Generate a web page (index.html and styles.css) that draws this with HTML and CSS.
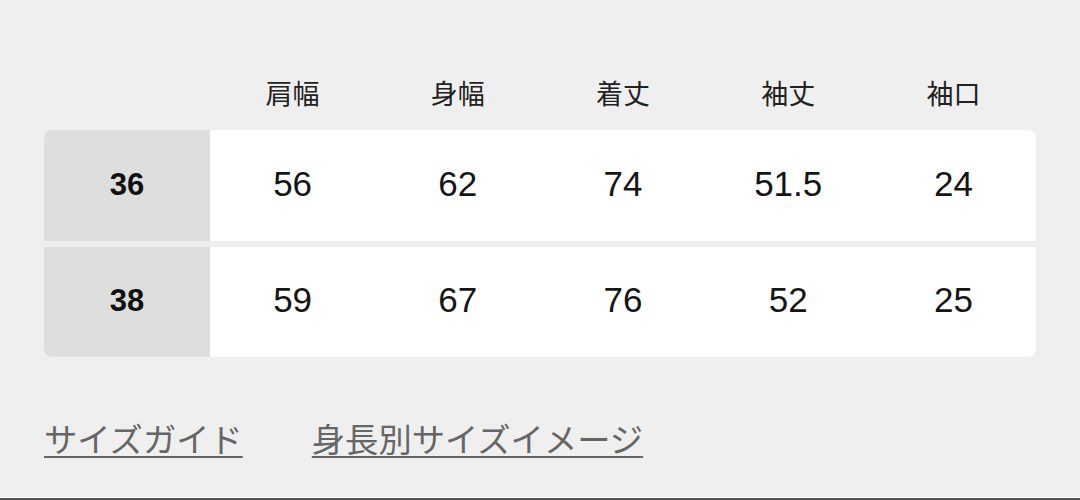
FILE: index.html
```html
<!DOCTYPE html>
<html lang="ja">
<head>
<meta charset="utf-8">
<link rel="stylesheet" href="styles.css">
</head>
<body>
<div class="page">
  <div class="head">
    <div></div>
    <div class="hcell">肩幅</div>
    <div class="hcell">身幅</div>
    <div class="hcell">着丈</div>
    <div class="hcell">袖丈</div>
    <div class="hcell">袖口</div>
  </div>
  <div class="table">
    <div class="row row-first">
      <div class="size">36</div>
      <div class="cell">56</div>
      <div class="cell">62</div>
      <div class="cell">74</div>
      <div class="cell">51.5</div>
      <div class="cell">24</div>
    </div>
    <div class="row row-last">
      <div class="size">38</div>
      <div class="cell">59</div>
      <div class="cell">67</div>
      <div class="cell">76</div>
      <div class="cell">52</div>
      <div class="cell">25</div>
    </div>
  </div>
  <div class="links">
    <a class="link" href="#">サイズガイド</a>
    <a class="link" href="#">身長別サイズイメージ</a>
  </div>
  <div class="footer"></div>
</div>
</body>
</html>
```

FILE: styles.css
```css
html, body {
  margin: 0;
  padding: 0;
  background: #efefef;
}
.page {
  height: 500px;
  box-sizing: border-box;
  display: flex;
  flex-direction: column;
  padding-top: 68px;
  font-family: "Liberation Sans", "Noto Sans CJK JP", sans-serif;
}
.head {
  display: grid;
  grid-template-columns: 166px repeat(5, 1fr);
  width: 992px;
  margin-left: 44px;
  height: 50px;
  align-items: center;
}
.hcell {
  text-align: center;
  font-family: "Noto Sans CJK JP", sans-serif;
  font-size: 27px;
  color: #222;
  line-height: 50px;
}
.table {
  margin-top: 12px;
  margin-left: 44px;
  width: 992px;
  display: flex;
  flex-direction: column;
  gap: 6px;
}
.row {
  display: grid;
  grid-template-columns: 166px repeat(5, 1fr);
  background: #fff;
  overflow: hidden;
}
.row-first {
  height: 111px;
  border-radius: 8px 8px 0 0;
}
.row-last {
  height: 110px;
  border-radius: 0 0 8px 8px;
}
.size {
  background: #dedede;
  display: flex;
  align-items: center;
  justify-content: center;
  font-weight: bold;
  font-size: 31px;
  color: #111;
  padding-bottom: 2px;
}
.cell {
  display: flex;
  align-items: center;
  justify-content: center;
  font-size: 35px;
  color: #151515;
  padding-bottom: 4px;
}
.links {
  margin-top: 59px;
  margin-left: 44px;
  display: flex;
  gap: 69px;
}
.link {
  font-family: "Noto Sans CJK JP", sans-serif;
  font-size: 33.3px;
  line-height: 44px;
  color: #666;
  text-decoration: underline;
  text-decoration-thickness: 2px;
  text-underline-offset: 4px;
}
.footer {
  margin-top: auto;
  height: 2px;
  background: #555;
  border-top: 1px solid #fff;
}
```
